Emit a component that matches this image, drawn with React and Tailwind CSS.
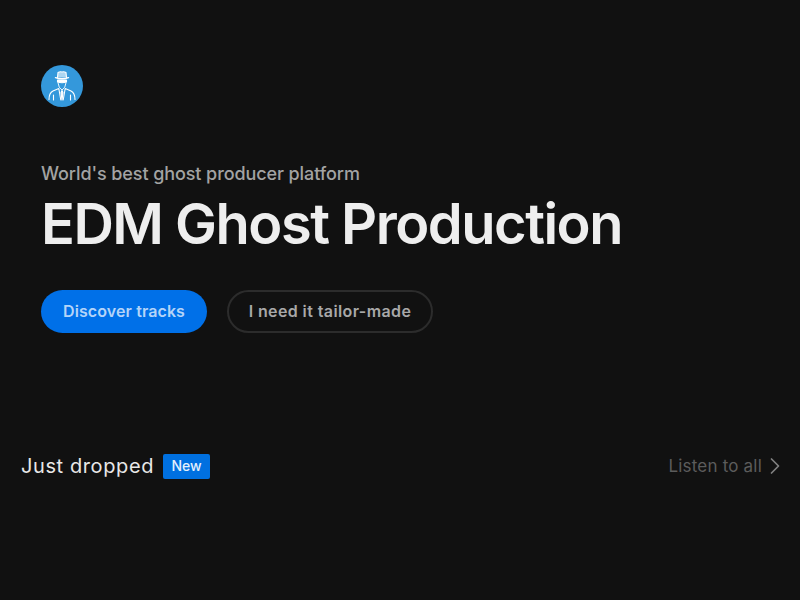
import React from "react";
import { ChevronRight } from "lucide-react";

const font = { fontFamily: "Inter, 'Noto Sans', sans-serif" };

function Logo() {
  return (
    <div className="w-[42px] h-[42px] rounded-full bg-[#3498db] flex items-center justify-center">
      <svg width="42" height="42" viewBox="0 0 42 42" fill="none" stroke="#fff" strokeWidth="1.1" strokeLinecap="round" strokeLinejoin="round">
        <path d="M16.5 12.5 L17 7.5 Q19 6.3 21 7 Q23 6.3 25 7.5 L25.5 12.5" fill="#fff" fillOpacity=".6" />
        <path d="M14.5 12.6 Q21 15 27.5 12.6" strokeWidth="1.4" />
        <path d="M16.5 15 H25.5 V17 Q21 18.6 16.5 17 Z" fill="#fff" />
        <path d="M17 18 Q17.5 23 21 25 Q24.5 23 25 18" strokeWidth=".9" />
        <path d="M8 34.5 Q8 28 12 26 L17.8 23.5 L19.8 35" />
        <path d="M34 34.5 Q34 28 30 26 L24.2 23.5 L22.2 35" />
        <path d="M21 25.5 L20 27.5 L21 35 L22 27.5 Z" fill="#fff" />
        <path d="M12.5 30 V35 M29.5 30 V35" />
      </svg>
    </div>
  );
}

export default function App() {
  return (
    <div className="w-[800px] h-[600px] bg-[#111111] overflow-hidden flex flex-col" style={font}>
      <div className="pl-[41px] pt-[65px] flex flex-col items-start">
        <Logo />
        <p className="mt-[55px] text-[18px] leading-[24px] font-medium text-[#a3a3a3] tracking-[-0.09px]">
          World's best ghost producer platform
        </p>
        <h1 className="mt-[6px] text-[56px] leading-[64px] font-semibold text-[#eeeeee] tracking-[-1.5px]">
          EDM Ghost Production
        </h1>
        <div className="mt-[34px] flex gap-[20px]">
          <button className="h-[43px] w-[166px] rounded-full bg-[#0070e8] pb-[2px] text-[16px] font-semibold text-[#b4d4f8] tracking-[0.1px]">
            Discover tracks
          </button>
          <button className="h-[43px] w-[206px] rounded-full border-2 border-[#2c2c2c] pb-[2px] text-[16px] font-semibold text-[#a8a8a8] tracking-[0.4px]">
            I need it tailor-made
          </button>
        </div>
      </div>
      <div className="mt-[120px] px-[21px] flex items-center justify-between h-[26px]">
        <div className="flex items-center gap-[9px]">
          <span className="text-[20px] text-[#e8e8e8] tracking-[0.6px]">Just dropped</span>
          <span className="w-[47px] h-[25px] rounded-[2px] bg-[#0070e0] pb-[2px] flex items-center justify-center text-[14px] font-medium text-[#e4f0fc]">
            New
          </span>
        </div>
        <div className="flex items-center text-[#5c5c5c] mr-[-10px]">
          <span className="text-[17px] tracking-[0.2px] mr-[-1px] pt-[2px]">Listen to all</span>
          <ChevronRight size={28} strokeWidth={1.5} className="text-[#808080]" />
        </div>
      </div>
    </div>
  );
}
